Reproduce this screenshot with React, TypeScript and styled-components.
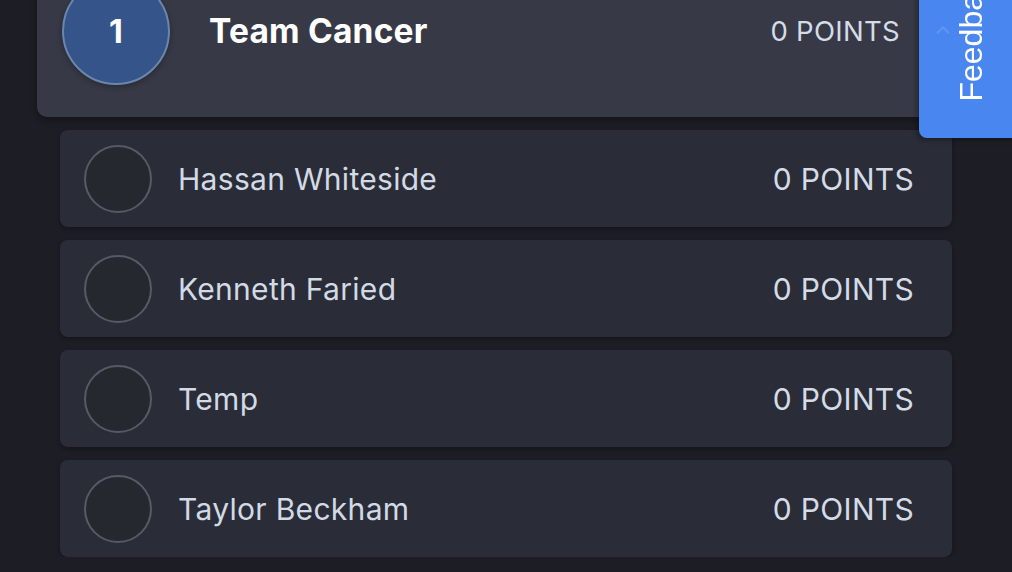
import styled, {createGlobalStyle} from "styled-components";
import {ChevronUp} from "lucide-react";

const GlobalStyle = createGlobalStyle`
  html, body {
    margin: 0;
    padding: 0;
    background: #1d1e25;
    overflow: hidden;
  }
  body {
    font-family: Inter, "Noto Sans", sans-serif;
    -webkit-font-smoothing: antialiased;
  }
`

const members = ["Hassan Whiteside", "Kenneth Faried", "Temp", "Taylor Beckham"];

const App = () => {
    return <>
        <GlobalStyle/>
        <Page>
            <TeamCard>
                <Badge>1</Badge>
                <TeamName>Team Cancer</TeamName>
                <Points $size={27.5}>0 POINTS</Points>
            </TeamCard>
            <MemberList>
                {members.map(name =>
                    <MemberRow key={name}>
                        <Avatar/>
                        <MemberName>{name}</MemberName>
                        <Points $size={30}>0 POINTS</Points>
                    </MemberRow>
                )}
            </MemberList>
        </Page>
        <FeedbackTab>
            <TabChevron>
                <ChevronUp size={22} strokeWidth={2.5}/>
            </TabChevron>
            <FeedbackLabel>Feedback</FeedbackLabel>
        </FeedbackTab>
    </>
}

export default App;

const Page = styled.div`
  display: flex;
  flex-direction: column;
  margin-top: -40px;
  padding: 0 60px 0 37px;
`
const TeamCard = styled.div`
  display: flex;
  align-items: center;
  height: 157px;
  box-sizing: border-box;
  padding: 17px 52px 32px 25px;
  background: #373a46;
  border-radius: 0 0 10px 10px;
  box-shadow: 0 3px 6px rgba(0, 0, 0, 0.35);
`
const Badge = styled.div`
  width: 104px;
  height: 104px;
  flex-shrink: 0;
  display: flex;
  align-items: center;
  justify-content: center;
  border-radius: 50%;
  background: #34548a;
  border: 2px solid #6b86ad;
  color: #ffffff;
  font-size: 32px;
  font-weight: 700;
  box-shadow: 0 2px 6px rgba(0, 0, 0, 0.3);
`
const TeamName = styled.div`
  margin-left: 39px;
  color: #ffffff;
  font-size: 33.5px;
  font-weight: 700;
  letter-spacing: 0.2px;
`
const Points = styled.div<{ $size: number }>`
  margin-left: auto;
  color: #d5dce7;
  font-size: ${p => p.$size}px;
  font-weight: 400;
  letter-spacing: 0.3px;
`
const MemberList = styled.div`
  display: flex;
  flex-direction: column;
  gap: 13px;
  margin-top: 13px;
  padding-left: 23px;
`
const MemberRow = styled.div`
  display: flex;
  align-items: center;
  height: 97px;
  padding: 0 38px 0 24px;
  background: #2a2d37;
  border-radius: 8px;
  box-shadow: 0 2px 4px rgba(0, 0, 0, 0.3);
`
const Avatar = styled.div`
  width: 64px;
  height: 64px;
  flex-shrink: 0;
  border-radius: 50%;
  border: 2px solid #575a63;
  background: #262830;
`
const MemberName = styled.div`
  margin-left: 26px;
  color: #d2dae6;
  font-size: 30px;
  font-weight: 400;
  letter-spacing: 0.3px;
`
const FeedbackTab = styled.div`
  position: fixed;
  top: -10px;
  right: -10px;
  width: 103px;
  height: 148px;
  background: #4a86ef;
  border-radius: 0 0 0 8px;
  box-shadow: -2px 2px 5px rgba(0, 0, 0, 0.35);
`
const TabChevron = styled.div`
  position: absolute;
  left: 13px;
  top: 29px;
  color: rgba(255, 255, 255, 0.12);
  display: flex;
`
const FeedbackLabel = styled.span`
  position: absolute;
  left: 36px;
  bottom: 36px;
  writing-mode: vertical-rl;
  transform: rotate(180deg);
  font-family: "Liberation Sans", Arial, sans-serif;
  font-size: 32px;
  line-height: 32px;
  color: #ffffff;
  white-space: nowrap;
`
